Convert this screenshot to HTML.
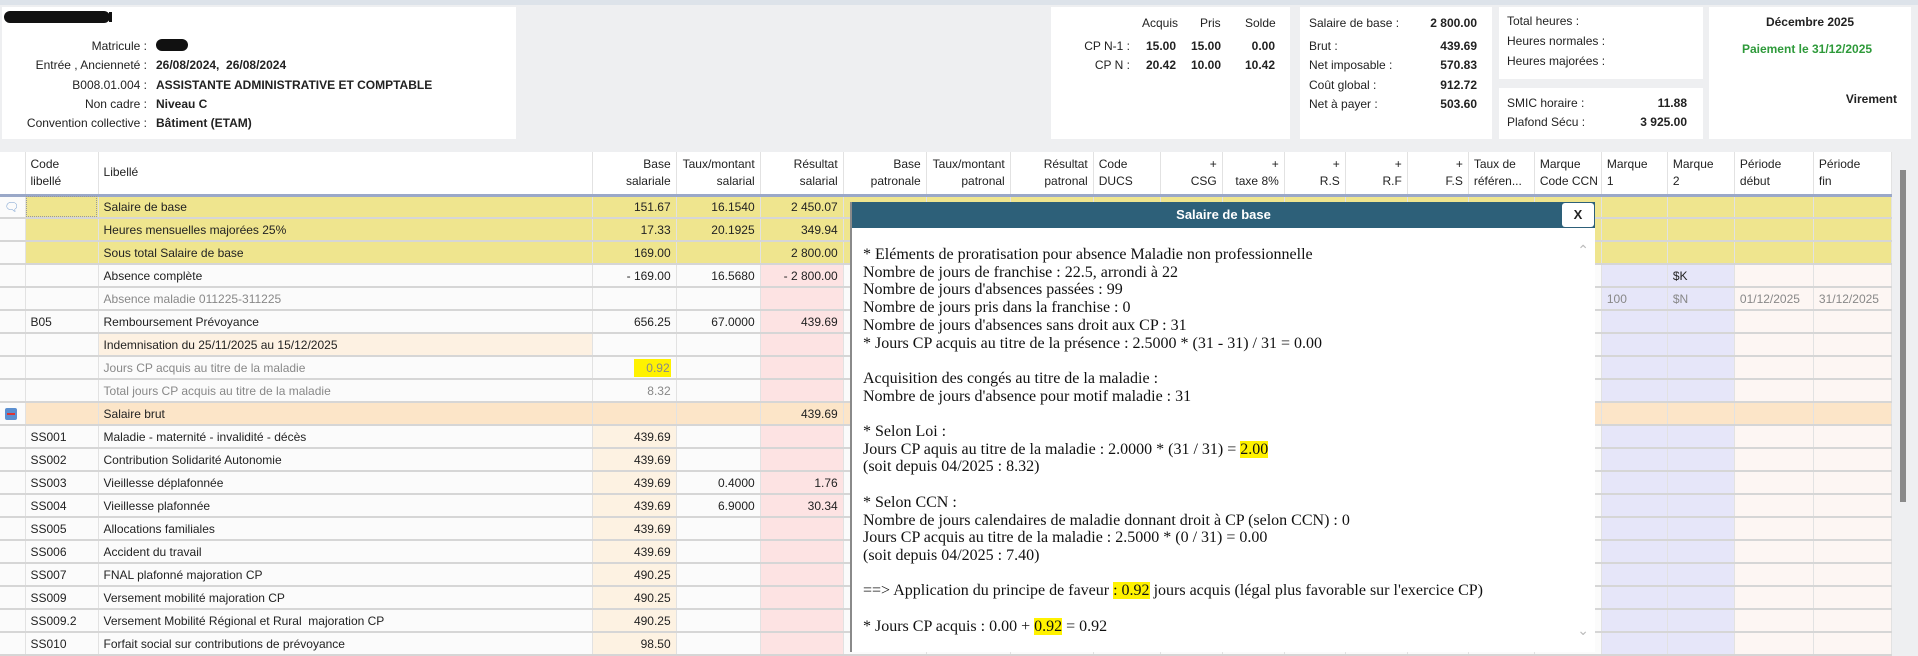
<!DOCTYPE html>
<html><head><meta charset="utf-8">
<style>
*{margin:0;padding:0;box-sizing:border-box}
body{width:1918px;height:642px;overflow:hidden;background:#eeeff1;font-family:"Liberation Sans",Arial,sans-serif;font-size:12px;color:#222;position:relative}
.abs{position:absolute}
.panel{position:absolute;background:#fff}
.lbl{position:absolute;white-space:nowrap;font-size:12px;color:#222}
.b{font-weight:bold}
.r{text-align:right}
table{position:absolute;left:0;top:152px;border-collapse:collapse;table-layout:fixed;width:1892px}
td,th{height:23px;border-bottom:2px solid #d6d6d6;border-right:1px solid #e2e2e2;white-space:nowrap;overflow:hidden;padding:0 5px;font-weight:normal;background:#fbfbfb}
th{height:43px;background:#fff;text-align:left;vertical-align:middle;line-height:17px;border-bottom:3px solid #9aa8c8;color:#222}
th.n{text-align:right}
td.n{text-align:right}
.y td{background:#efe58e}
.y td.g{background:#fbfbfb}
.br td{background:#fce5c8}
.br td.g{background:#fbfbfb}
td.pk{background:#fde3e3}
td.pe{background:#fdf2e2}
td.lv{background:#e6e6f9}
td.pr{background:#fdf6f3}
td.ind{background:#fdf1e2}
.gr{color:#888}
.hl{background:#fff200}
#pop{position:absolute;left:850px;top:202px;width:745px;height:450px;background:#fff;border-left:2px solid #8a8a8a}
#pop .t{height:26px;background:#2d6079;color:#fff;font-weight:bold;font-size:13px;text-align:center;line-height:26px}
#pop .x{position:absolute;right:1px;top:1px;width:32px;height:24px;background:#fff;border-radius:3px;color:#222;font-weight:bold;text-align:center;line-height:24px;font-size:13px}
#pop .body{position:absolute;left:11px;top:44px;font-family:"Liberation Serif","Times New Roman",serif;font-size:16px;line-height:17.7px;color:#111;white-space:pre}
#pop .body .hl{background:#fff200}
</style></head><body>
<div class="abs" style="left:0;top:0;width:1918px;height:5px;background:#dde3ea"></div>

<div class="panel" style="left:2px;top:7px;width:514px;height:132px"></div>
<div class="abs" style="left:4px;top:11px;width:106px;height:12px;background:#111;border-radius:6px"></div>
<div class="abs" style="left:109px;top:12px;width:3px;height:10px;background:#111"></div>
<div class="lbl r" style="right:1771px;top:39px">Matricule :</div>
<div class="abs" style="left:156px;top:39px;width:32px;height:12px;background:#111;border-radius:6px"></div>
<div class="lbl r" style="right:1771px;top:58px">Entrée , Ancienneté :</div>
<div class="lbl b" style="left:156px;top:58px">26/08/2024,&nbsp; 26/08/2024</div>
<div class="lbl r" style="right:1771px;top:78px">B008.01.004 :</div>
<div class="lbl b" style="left:156px;top:78px">ASSISTANTE ADMINISTRATIVE ET COMPTABLE</div>
<div class="lbl r" style="right:1771px;top:97px">Non cadre :</div>
<div class="lbl b" style="left:156px;top:97px">Niveau C</div>
<div class="lbl r" style="right:1771px;top:116px">Convention collective :</div>
<div class="lbl b" style="left:156px;top:116px">Bâtiment (ETAM)</div>

<div class="panel" style="left:1051px;top:7px;width:239px;height:132px"></div>
<div class="lbl" style="left:1142px;top:16px">Acquis</div>
<div class="lbl" style="left:1200px;top:16px">Pris</div>
<div class="lbl" style="left:1245px;top:16px">Solde</div>
<div class="lbl r" style="right:788px;top:39px">CP N-1 :</div>
<div class="lbl b r" style="right:742px;top:39px">15.00</div>
<div class="lbl b r" style="right:697px;top:39px">15.00</div>
<div class="lbl b r" style="right:643px;top:39px">0.00</div>
<div class="lbl r" style="right:788px;top:58px">CP N :</div>
<div class="lbl b r" style="right:742px;top:58px">20.42</div>
<div class="lbl b r" style="right:697px;top:58px">10.00</div>
<div class="lbl b r" style="right:643px;top:58px">10.42</div>

<div class="panel" style="left:1300px;top:7px;width:192px;height:132px"></div>
<div class="lbl" style="left:1309px;top:16px">Salaire de base :</div><div class="lbl b r" style="right:441px;top:16px">2 800.00</div>
<div class="lbl" style="left:1309px;top:39px">Brut :</div><div class="lbl b r" style="right:441px;top:39px">439.69</div>
<div class="lbl" style="left:1309px;top:58px">Net imposable :</div><div class="lbl b r" style="right:441px;top:58px">570.83</div>
<div class="lbl" style="left:1309px;top:78px">Coût global :</div><div class="lbl b r" style="right:441px;top:78px">912.72</div>
<div class="lbl" style="left:1309px;top:97px">Net à payer :</div><div class="lbl b r" style="right:441px;top:97px">503.60</div>

<div class="panel" style="left:1499px;top:7px;width:204px;height:72px"></div>
<div class="lbl" style="left:1507px;top:14px">Total heures :</div>
<div class="lbl" style="left:1507px;top:34px">Heures normales :</div>
<div class="lbl" style="left:1507px;top:54px">Heures majorées :</div>
<div class="panel" style="left:1499px;top:88px;width:204px;height:51px"></div>
<div class="lbl" style="left:1507px;top:96px">SMIC horaire :</div><div class="lbl b r" style="right:231px;top:96px">11.88</div>
<div class="lbl" style="left:1507px;top:115px">Plafond Sécu :</div><div class="lbl b r" style="right:231px;top:115px">3 925.00</div>

<div class="panel" style="left:1709px;top:7px;width:202px;height:132px"></div>
<div class="lbl b" style="left:1709px;width:202px;text-align:center;top:15px">Décembre 2025</div>
<div class="lbl b" style="left:1709px;width:196px;text-align:center;top:42px;color:#2e9a3a">Paiement le 31/12/2025</div>
<div class="lbl b r" style="right:21px;top:92px">Virement</div>

<table>
<colgroup><col style="width:25px"><col style="width:73px"><col style="width:494px"><col style="width:84px"><col style="width:84px"><col style="width:83px"><col style="width:83px"><col style="width:84px"><col style="width:83px"><col style="width:67px"><col style="width:62px"><col style="width:62px"><col style="width:61px"><col style="width:62px"><col style="width:61px"><col style="width:66px"><col style="width:67px"><col style="width:66px"><col style="width:67px"><col style="width:79px"><col style="width:78px"></colgroup>
<tr><th></th><th>Code<br>libellé</th><th>Libellé</th><th class="n">Base<br>salariale</th><th class="n">Taux/montant<br>salarial</th><th class="n">Résultat<br>salarial</th><th class="n">Base<br>patronale</th><th class="n">Taux/montant<br>patronal</th><th class="n">Résultat<br>patronal</th><th>Code<br>DUCS</th><th class="n">+<br>CSG</th><th class="n">+<br>taxe 8%</th><th class="n">+<br>R.S</th><th class="n">+<br>R.F</th><th class="n">+<br>F.S</th><th>Taux de<br>référen...</th><th>Marque<br>Code CCN</th><th>Marque<br>1</th><th>Marque<br>2</th><th>Période<br>début</th><th>Période<br>fin</th></tr>
<tr class="y"><td class="g" style="color:#7aa0d0;padding:0 4px">&#128488;</td><td style="outline:1px dotted #999;outline-offset:-2px"></td><td>Salaire de base</td><td class="n">151.67</td><td class="n">16.1540</td><td class="n">2 450.07</td><td></td><td></td><td></td><td></td><td></td><td></td><td></td><td></td><td></td><td></td><td></td><td></td><td></td><td></td><td></td></tr>
<tr class="y"><td class="g"></td><td></td><td>Heures mensuelles majorées 25%</td><td class="n">17.33</td><td class="n">20.1925</td><td class="n">349.94</td><td></td><td></td><td></td><td></td><td></td><td></td><td></td><td></td><td></td><td></td><td></td><td></td><td></td><td></td><td></td></tr>
<tr class="y"><td class="g"></td><td></td><td>Sous total Salaire de base</td><td class="n">169.00</td><td></td><td class="n">2 800.00</td><td></td><td></td><td></td><td></td><td></td><td></td><td></td><td></td><td></td><td></td><td></td><td></td><td></td><td></td><td></td></tr>
<tr><td></td><td></td><td>Absence complète</td><td class="n">- 169.00</td><td class="n">16.5680</td><td class="n pk">- 2 800.00</td><td></td><td></td><td></td><td></td><td></td><td></td><td></td><td></td><td></td><td></td><td></td><td class="lv"></td><td class="lv">$K</td><td class="pr"></td><td class="pr"></td></tr>
<tr class="gr"><td></td><td></td><td>Absence maladie 011225-311225</td><td></td><td></td><td class="pk"></td><td></td><td></td><td></td><td></td><td></td><td></td><td></td><td></td><td></td><td></td><td></td><td class="lv">100</td><td class="lv">$N</td><td class="pr">01/12/2025</td><td class="pr">31/12/2025</td></tr>
<tr><td></td><td>B05</td><td>Remboursement Prévoyance</td><td class="n">656.25</td><td class="n">67.0000</td><td class="n pk">439.69</td><td></td><td></td><td></td><td></td><td></td><td></td><td></td><td></td><td></td><td></td><td></td><td class="lv"></td><td class="lv"></td><td class="pr"></td><td class="pr"></td></tr>
<tr><td></td><td></td><td class="ind">Indemnisation du 25/11/2025 au 15/12/2025</td><td></td><td></td><td class="pk"></td><td></td><td></td><td></td><td></td><td></td><td></td><td></td><td></td><td></td><td></td><td></td><td class="lv"></td><td class="lv"></td><td class="pr"></td><td class="pr"></td></tr>
<tr class="gr"><td></td><td></td><td>Jours CP acquis au titre de la maladie</td><td class="n"><span class="hl" style="padding:2px 1px 2px 12px">0.92</span></td><td></td><td class="pk"></td><td></td><td></td><td></td><td></td><td></td><td></td><td></td><td></td><td></td><td></td><td></td><td class="lv"></td><td class="lv"></td><td class="pr"></td><td class="pr"></td></tr>
<tr class="gr"><td></td><td></td><td>Total jours CP acquis au titre de la maladie</td><td class="n">8.32</td><td></td><td class="pk"></td><td></td><td></td><td></td><td></td><td></td><td></td><td></td><td></td><td></td><td></td><td></td><td class="lv"></td><td class="lv"></td><td class="pr"></td><td class="pr"></td></tr>
<tr class="br"><td class="g" style="padding:0 5px"><div style="width:12px;height:12px;background:#5b8fd0;border-radius:2px;position:relative"><div style="position:absolute;left:2px;top:5px;width:8px;height:2px;background:#d33"></div></div></td><td></td><td>Salaire brut</td><td></td><td></td><td class="n">439.69</td><td></td><td></td><td></td><td></td><td></td><td></td><td></td><td></td><td></td><td></td><td></td><td></td><td></td><td></td><td></td></tr>
<tr><td></td><td>SS001</td><td>Maladie - maternité - invalidité - décès</td><td class="n pe">439.69</td><td></td><td class="pk"></td><td></td><td></td><td></td><td></td><td></td><td></td><td></td><td></td><td></td><td></td><td></td><td class="lv"></td><td class="lv"></td><td class="pr"></td><td class="pr"></td></tr>
<tr><td></td><td>SS002</td><td>Contribution Solidarité Autonomie</td><td class="n pe">439.69</td><td></td><td class="pk"></td><td></td><td></td><td></td><td></td><td></td><td></td><td></td><td></td><td></td><td></td><td></td><td class="lv"></td><td class="lv"></td><td class="pr"></td><td class="pr"></td></tr>
<tr><td></td><td>SS003</td><td>Vieillesse déplafonnée</td><td class="n pe">439.69</td><td class="n">0.4000</td><td class="n pk">1.76</td><td></td><td></td><td></td><td></td><td></td><td></td><td></td><td></td><td></td><td></td><td></td><td class="lv"></td><td class="lv"></td><td class="pr"></td><td class="pr"></td></tr>
<tr><td></td><td>SS004</td><td>Vieillesse plafonnée</td><td class="n pe">439.69</td><td class="n">6.9000</td><td class="n pk">30.34</td><td></td><td></td><td></td><td></td><td></td><td></td><td></td><td></td><td></td><td></td><td></td><td class="lv"></td><td class="lv"></td><td class="pr"></td><td class="pr"></td></tr>
<tr><td></td><td>SS005</td><td>Allocations familiales</td><td class="n pe">439.69</td><td></td><td class="pk"></td><td></td><td></td><td></td><td></td><td></td><td></td><td></td><td></td><td></td><td></td><td></td><td class="lv"></td><td class="lv"></td><td class="pr"></td><td class="pr"></td></tr>
<tr><td></td><td>SS006</td><td>Accident du travail</td><td class="n pe">439.69</td><td></td><td class="pk"></td><td></td><td></td><td></td><td></td><td></td><td></td><td></td><td></td><td></td><td></td><td></td><td class="lv"></td><td class="lv"></td><td class="pr"></td><td class="pr"></td></tr>
<tr><td></td><td>SS007</td><td>FNAL plafonné majoration CP</td><td class="n pe">490.25</td><td></td><td class="pk"></td><td></td><td></td><td></td><td></td><td></td><td></td><td></td><td></td><td></td><td></td><td></td><td class="lv"></td><td class="lv"></td><td class="pr"></td><td class="pr"></td></tr>
<tr><td></td><td>SS009</td><td>Versement mobilité majoration CP</td><td class="n pe">490.25</td><td></td><td class="pk"></td><td></td><td></td><td></td><td></td><td></td><td></td><td></td><td></td><td></td><td></td><td></td><td class="lv"></td><td class="lv"></td><td class="pr"></td><td class="pr"></td></tr>
<tr><td></td><td>SS009.2</td><td>Versement Mobilité Régional et Rural&nbsp; majoration CP</td><td class="n pe">490.25</td><td></td><td class="pk"></td><td></td><td></td><td></td><td></td><td></td><td></td><td></td><td></td><td></td><td></td><td></td><td class="lv"></td><td class="lv"></td><td class="pr"></td><td class="pr"></td></tr>
<tr><td></td><td>SS010</td><td>Forfait social sur contributions de prévoyance</td><td class="n pe">98.50</td><td></td><td class="pk"></td><td></td><td></td><td></td><td></td><td></td><td></td><td></td><td></td><td></td><td></td><td></td><td class="lv"></td><td class="lv"></td><td class="pr"></td><td class="pr"></td></tr>
</table>

<div class="abs" style="left:1900px;top:170px;width:6px;height:332px;background:#8a8a8a"></div>

<div id="pop">
<div class="t">Salaire de base</div>
<div class="x">X</div>
<div class="abs" style="right:6px;top:40px;color:#bbb;font-size:14px">&#8963;</div>
<div class="abs" style="right:6px;top:420px;color:#bbb;font-size:14px">&#8964;</div>
<div class="body">* Eléments de proratisation pour absence Maladie non professionnelle
Nombre de jours de franchise : 22.5, arrondi à 22
Nombre de jours d'absences passées : 99
Nombre de jours pris dans la franchise : 0
Nombre de jours d'absences sans droit aux CP : 31
* Jours CP acquis au titre de la présence : 2.5000 * (31 - 31) / 31 = 0.00

Acquisition des congés au titre de la maladie :
Nombre de jours d'absence pour motif maladie : 31

* Selon Loi :
Jours CP aquis au titre de la maladie : 2.0000 * (31 / 31) = <span class="hl">2.00</span>
(soit depuis 04/2025 : 8.32)

* Selon CCN :
Nombre de jours calendaires de maladie donnant droit à CP (selon CCN) : 0
Jours CP acquis au titre de la maladie : 2.5000 * (0 / 31) = 0.00
(soit depuis 04/2025 : 7.40)

==&gt; Application du principe de faveur <span class="hl">: 0.92</span> jours acquis (légal plus favorable sur l'exercice CP)

* Jours CP acquis : 0.00 + <span class="hl">0.92</span> = 0.92</div>
</div>
</body></html>
